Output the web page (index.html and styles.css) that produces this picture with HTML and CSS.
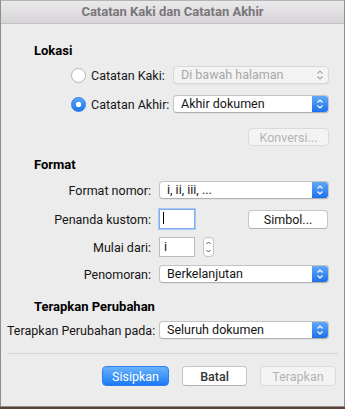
FILE: index.html
```html
<!DOCTYPE html>
<html lang="id">
<head>
  <meta charset="UTF-8" />
  <meta name="viewport" content="width=device-width, initial-scale=1.0"/>
  <title>Catatan Kaki dan Catatan Akhir</title>
  <link rel="stylesheet" href="styles.css">
</head>
<body>
  <div class="window">
    <div class="titlebar">Catatan Kaki dan Catatan Akhir</div>

    <div class="content">
      <h2 class="heading heading-lokasi">Lokasi</h2>

      <div class="radio-row row-kaki">
        <label class="radio-label"><span class="radio"></span>Catatan Kaki:</label>
        <div class="popup popup-narrow disabled">
          <span class="popup-text">Di bawah halaman</span>
          <span class="arrows">
            <svg width="8" height="12" viewBox="0 0 8 12"><path d="M1.5 4.5 L4 2 L6.5 4.5 M1.5 7.5 L4 10 L6.5 7.5" fill="none" stroke="#a9a9a9" stroke-width="1.2"/></svg>
          </span>
        </div>
      </div>

      <div class="radio-row row-akhir">
        <label class="radio-label"><span class="radio checked"></span>Catatan Akhir:</label>
        <div class="popup popup-narrow">
          <span class="popup-text">Akhir dokumen</span>
          <span class="arrows blue">
            <svg width="8" height="12" viewBox="0 0 8 12"><path d="M1.5 4.5 L4 2 L6.5 4.5 M1.5 7.5 L4 10 L6.5 7.5" fill="none" stroke="#fff" stroke-width="1.2"/></svg>
          </span>
        </div>
      </div>

      <div class="right-row row-konversi">
        <button class="btn btn-disabled btn-konversi">Konversi...</button>
      </div>

      <h2 class="heading heading-format">Format</h2>

      <div class="form-row row-nomor">
        <span class="label">Format nomor:</span>
        <div class="popup popup-wide">
          <span class="popup-text">i, ii, iii, ...</span>
          <span class="arrows blue">
            <svg width="8" height="12" viewBox="0 0 8 12"><path d="M1.5 4.5 L4 2 L6.5 4.5 M1.5 7.5 L4 10 L6.5 7.5" fill="none" stroke="#fff" stroke-width="1.2"/></svg>
          </span>
        </div>
      </div>

      <div class="form-row row-penanda">
        <span class="label">Penanda kustom:</span>
        <div class="field focused"><span class="caret"></span></div>
        <button class="btn btn-simbol">Simbol...</button>
      </div>

      <div class="form-row row-mulai">
        <span class="label">Mulai dari:</span>
        <div class="field">i</div>
        <div class="stepper">
          <svg width="11" height="20" viewBox="0 0 11 20"><path d="M3.5 7 L5.5 5 L7.5 7 M3.5 13 L5.5 15 L7.5 13" fill="none" stroke="#555" stroke-width="1"/></svg>
        </div>
      </div>

      <div class="form-row row-penomoran">
        <span class="label">Penomoran:</span>
        <div class="popup popup-wide">
          <span class="popup-text">Berkelanjutan</span>
          <span class="arrows blue">
            <svg width="8" height="12" viewBox="0 0 8 12"><path d="M1.5 4.5 L4 2 L6.5 4.5 M1.5 7.5 L4 10 L6.5 7.5" fill="none" stroke="#fff" stroke-width="1.2"/></svg>
          </span>
        </div>
      </div>

      <h2 class="heading heading-terapkan">Terapkan Perubahan</h2>

      <div class="form-row row-pada">
        <span class="label">Terapkan Perubahan pada:</span>
        <div class="popup popup-wide">
          <span class="popup-text">Seluruh dokumen</span>
          <span class="arrows blue">
            <svg width="8" height="12" viewBox="0 0 8 12"><path d="M1.5 4.5 L4 2 L6.5 4.5 M1.5 7.5 L4 10 L6.5 7.5" fill="none" stroke="#fff" stroke-width="1.2"/></svg>
          </span>
        </div>
      </div>

      <hr class="separator">

      <div class="buttons">
        <button class="btn btn-default">Sisipkan</button>
        <button class="btn btn-batal">Batal</button>
        <button class="btn btn-disabled btn-terapkan">Terapkan</button>
      </div>
    </div>
  </div>
</body>
</html>
```

FILE: styles.css
```css
body {
  margin: 0;
  background: #5c4033;
  font-family: Roboto, "Liberation Sans", sans-serif;
  font-size: 12.5px;
  color: #151515;
}

.window {
  width: 343px;
  height: 405px;
  background: #ececec;
  border: 1px solid #8e8e8e;
  border-top-color: #b5b5b5;
}

.titlebar {
  height: 22px;
  line-height: 22px;
  text-align: center;
  color: #7a767a;
  font-weight: bold;
  font-size: 13px;
  background: linear-gradient(to bottom, #ebe9eb, #d6d4d6);
  border-bottom: 1px solid #c3c1c3;
}

.content {
  display: flex;
  flex-direction: column;
}

.heading {
  margin: 0;
  font-size: 13px;
  font-weight: bold;
  color: #000;
  line-height: 16px;
  padding-left: 33px;
}

.heading-lokasi { margin-top: 19px; }
.heading-format { margin-top: 11px; }
.heading-terapkan { margin-top: 16px; }

.radio-row {
  display: flex;
  align-items: center;
  padding-left: 70px;
  height: 18px;
}

.row-kaki { margin-top: 7px; }
.row-akhir { margin-top: 11px; }

.radio-label {
  display: flex;
  align-items: center;
  width: 102px;
}

.radio {
  width: 13px;
  height: 13px;
  border-radius: 50%;
  background: #fff;
  border: 1px solid #b3b3b3;
  margin-right: 5px;
  box-sizing: content-box;
}

.radio.checked {
  background: radial-gradient(circle, #fff 0 2.5px, transparent 3px), linear-gradient(to bottom, #5aa5f8, #1b76ee);
  border-color: #2f7de6;
}

.popup {
  display: flex;
  height: 18px;
  background: #fff;
  border: 1px solid #c4c4c4;
  border-bottom-color: #b0b0b0;
  border-radius: 4px;
  box-sizing: border-box;
  overflow: hidden;
  box-shadow: 0 1px 0 rgba(0, 0, 0, 0.04);
}

.popup-narrow { width: 156px; }
.popup-wide { width: 170px; }

.popup-text {
  flex: 1;
  padding-left: 7px;
  line-height: 16px;
  color: #151515;
}

.popup.disabled {
  background: #f3f3f3;
  border-color: #d8d8d8;
}

.popup.disabled .popup-text {
  color: #a8a8a8;
}

.arrows {
  width: 16px;
  display: flex;
  align-items: center;
  justify-content: center;
}

.arrows.blue {
  background: linear-gradient(to bottom, #62a8f8, #1c72ec);
}

.right-row {
  display: flex;
  justify-content: flex-end;
  padding-right: 15px;
  margin-top: 15px;
}

.btn {
  font-family: inherit;
  font-size: 12.5px;
  height: 19px;
  padding: 0;
  border-radius: 4px;
  background: #fff;
  border: 1px solid #c6c6c6;
  border-bottom-color: #b2b2b2;
  color: #151515;
  box-sizing: border-box;
  line-height: 17px;
}

.btn-konversi {
  width: 81px;
  height: 18px;
}

.btn-disabled {
  background: #f3f3f3;
  border-color: #dadada;
  color: #b3b3b3;
}

.form-row {
  display: flex;
  align-items: center;
  padding-left: 6px;
}

.label {
  width: 144px;
  text-align: right;
  margin-right: 8px;
  white-space: nowrap;
}

.row-nomor { margin-top: 8px; }
.row-penanda { margin-top: 10px; }
.row-mulai { margin-top: 8px; }
.row-penomoran { margin-top: 8px; }
.row-pada { margin-top: 6px; }

.field {
  width: 36px;
  height: 20px;
  background: #fff;
  border: 1px solid #bdbdbd;
  box-sizing: border-box;
  padding-left: 4px;
  line-height: 18px;
  color: #151515;
}

.field.focused {
  border: 1px solid #7eaef0;
  box-shadow: 0 0 0 1px #a8c8f4;
  position: relative;
}

.caret {
  position: absolute;
  left: 3px;
  top: 2px;
  width: 1px;
  height: 12px;
  background: #000;
}

.btn-simbol {
  width: 80px;
  margin-left: 53px;
}

.stepper {
  width: 11px;
  height: 20px;
  margin-left: 8px;
  background: #fff;
  border: 1px solid #c4c4c4;
  border-radius: 4px;
  box-sizing: border-box;
  display: flex;
  align-items: center;
  justify-content: center;
}

.stepper svg {
  flex: none;
}

.separator {
  margin: 14px 6px 0 6px;
  border: none;
  border-top: 1px solid #d6d6d6;
  height: 0;
}

.buttons {
  display: flex;
  margin-top: 12px;
  padding-left: 101px;
  gap: 13px;
}

.btn-default {
  width: 67px;
  height: 20px;
  color: #fff;
  border: 1px solid #2b7ff0;
  background: linear-gradient(to bottom, #6ab2fb, #1b7bf4);
}

.btn-batal {
  width: 65px;
  height: 20px;
  font-weight: 500;
  color: #333;
}

.btn-terapkan {
  width: 76px;
  height: 20px;
}
```
